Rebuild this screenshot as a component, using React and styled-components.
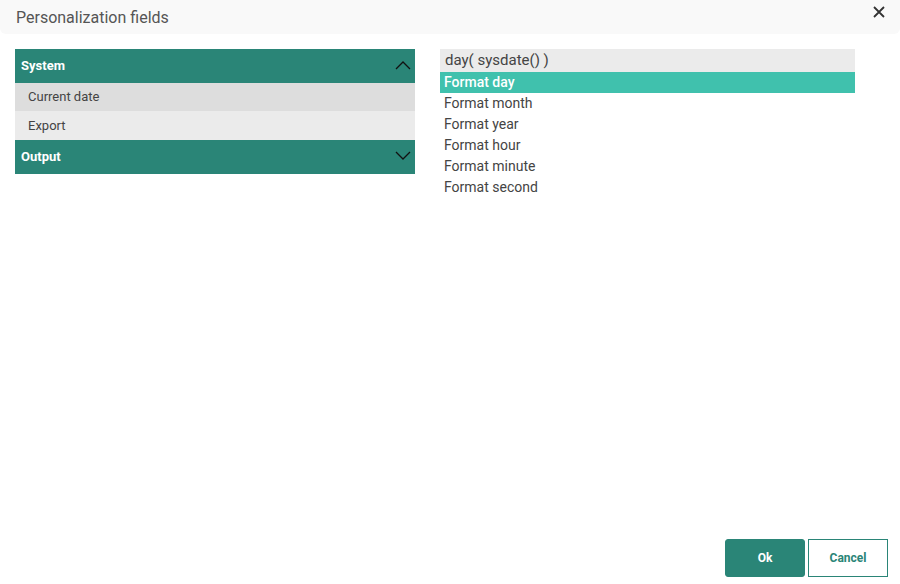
import React from "react";
import styled, { createGlobalStyle } from "styled-components";

const Global = createGlobalStyle`
  html, body { margin: 0; padding: 0; background: #fff; }
  body { font-family: Roboto, "Noto Sans", sans-serif; }
  #root { width: 900px; height: 584px; }
`;

const Dialog = styled.div`
  width: 900px;
  height: 584px;
  display: flex;
  flex-direction: column;
  box-sizing: border-box;
`;

const TitleBar = styled.div`
  height: 34px;
  background: #f9f9f9;
  border-radius: 0 0 6px 6px;
  display: flex;
  align-items: center;
  justify-content: space-between;
  padding: 0 13px 0 16px;
  box-sizing: border-box;
`;

const Title = styled.div`
  font-size: 16px;
  color: #555;
`;

const CloseBtn = styled.button`
  border: none;
  background: none;
  padding: 0;
  width: 16px;
  height: 16px;
  display: flex;
  align-items: center;
  justify-content: center;
  margin-top: -11px;
  cursor: pointer;
`;

const Body = styled.div`
  flex: 1;
  display: flex;
  padding: 15px 0 0 15px;
  gap: 25px;
`;

const LeftCol = styled.div`
  width: 400px;
  display: flex;
  flex-direction: column;
`;

const SectionHeader = styled.div`
  height: 34px;
  box-sizing: border-box;
  background: #2a8577;
  color: #fff;
  font-size: 13px;
  font-weight: 700;
  display: flex;
  align-items: center;
  justify-content: space-between;
  padding: 0 4px 2px 6px;
`;

const Item = styled.div`
  height: ${(p) => p.$h}px;
  box-sizing: border-box;
  background: ${(p) => (p.$active ? "#dddddd" : "#ebebeb")};
  color: #444;
  font-size: 13px;
  display: flex;
  align-items: center;
  padding: 0 0 1px 13px;
`;

const RightCol = styled.div`
  width: 415px;
  display: flex;
  flex-direction: column;
`;

const Expr = styled.div`
  height: 23px;
  box-sizing: border-box;
  background: #ebebeb;
  color: #444;
  font-size: 15px;
  display: flex;
  align-items: center;
  padding: 0 0 1px 5px;
`;

const Option = styled.div`
  height: 21px;
  box-sizing: border-box;
  display: flex;
  align-items: center;
  padding: 0 0 2px 4px;
  font-size: 14px;
  color: ${(p) => (p.$selected ? "#fff" : "#444")};
  background: ${(p) => (p.$selected ? "#40c1ad" : "transparent")};
  font-weight: ${(p) => (p.$selected ? 500 : 400)};
`;

const Footer = styled.div`
  display: flex;
  justify-content: flex-end;
  gap: 3px;
  padding: 0 12px 7px 0;
`;

const Button = styled.button`
  width: 80px;
  height: 38px;
  box-sizing: border-box;
  font-family: Roboto, sans-serif;
  font-size: 12px;
  font-weight: 700;
  border-radius: ${(p) => (p.$primary ? "3px" : "0")};
  border: 1px solid #2a8577;
  background: ${(p) => (p.$primary ? "#2a8577" : "#fff")};
  color: ${(p) => (p.$primary ? "#fff" : "#2a8577")};
  cursor: pointer;
`;

const Chevron = ({ up }) => (
  <svg width="16" height="10" viewBox="0 0 16 10">
    <path
      d={up ? "M1 9 L8 2 L15 9" : "M1 1 L8 8 L15 1"}
      fill="none"
      stroke="#111"
      strokeWidth="1.3"
    />
  </svg>
);

const options = [
  "Format day",
  "Format month",
  "Format year",
  "Format hour",
  "Format minute",
  "Format second",
];

export default function App() {
  return (
    <>
      <Global />
      <Dialog>
        <TitleBar>
          <Title>Personalization fields</Title>
          <CloseBtn aria-label="close">
            <svg width="12" height="12" viewBox="0 0 12 12">
              <path d="M1 1 L11 11 M11 1 L1 11" stroke="#333" strokeWidth="1.8" />
            </svg>
          </CloseBtn>
        </TitleBar>
        <Body>
          <LeftCol>
            <SectionHeader>
              System
              <Chevron up />
            </SectionHeader>
            <Item $active $h={28}>Current date</Item>
            <Item $h={29}>Export</Item>
            <SectionHeader>
              Output
              <Chevron />
            </SectionHeader>
          </LeftCol>
          <RightCol>
            <Expr>day( sysdate() )</Expr>
            {options.map((o, i) => (
              <Option key={o} $selected={i === 0}>
                {o}
              </Option>
            ))}
          </RightCol>
        </Body>
        <Footer>
          <Button $primary>Ok</Button>
          <Button>Cancel</Button>
        </Footer>
      </Dialog>
    </>
  );
}
